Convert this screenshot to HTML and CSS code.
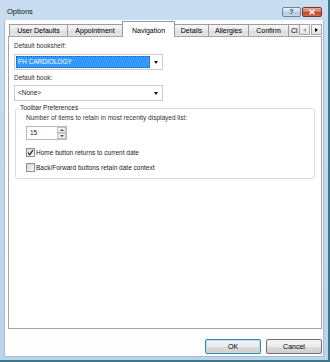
FILE: index.html
```html
<!DOCTYPE html>
<html lang="en">
    <head>
        <meta charset="UTF-8" />
        <title>Options</title>
        <link rel="stylesheet" href="styles.css">
    </head>
    <body>
        <div class="window">
            <div class="titlebar">
                <span class="title">Options</span>
                <div class="caption-buttons">
                    <span class="cap-btn help">?</span>
                    <span class="cap-btn close">
                        <svg width="8" height="6" viewBox="0 0 8 6"><path d="M1.5 0.8 L6.5 5.2 M6.5 0.8 L1.5 5.2" stroke="#fff" stroke-width="1.5" fill="none"/></svg>
                    </span>
                </div>
            </div>
            <div class="client">
                <div class="tabstrip">
                    <div class="tabs">
                        <div class="tab" id="tab-user">User Defaults</div>
                        <div class="tab" id="tab-appt">Appointment</div>
                        <div class="tab active" id="tab-nav">Navigation</div>
                        <div class="tab" id="tab-details">Details</div>
                        <div class="tab" id="tab-allergies">Allergies</div>
                        <div class="tab" id="tab-confirm">Confirm</div>
                        <div class="tab" id="tab-clinical">Cl</div>
                    </div>
                    <div class="scroller">
                        <span class="scroll-btn"><span class="arrow-left"></span></span>
                        <span class="scroll-btn"><span class="arrow-right"></span></span>
                    </div>
                </div>
                <div class="panel">
                    <div class="label">Default bookshelf:</div>
                    <div class="combo">
                        <span class="combo-value selected">FH CARDIOLOGY</span>
                        <span class="combo-arrow"></span>
                    </div>
                    <div class="label label-book">Default book:</div>
                    <div class="combo combo-book">
                        <span class="combo-value">&lt;None&gt;</span>
                        <span class="combo-arrow"></span>
                    </div>
                    <fieldset class="group">
                        <legend>Toolbar Preferences</legend>
                        <div class="label">Number of items to retain in most recently displayed list:</div>
                        <div class="spinner">
                            <span class="spin-value">15</span>
                            <span class="spin-btns">
                                <span class="spin-btn"><span class="arrow-up"></span></span>
                                <span class="spin-btn"><span class="arrow-down"></span></span>
                            </span>
                        </div>
                        <div class="check check-first">
                            <span class="box">
                                <svg width="7" height="7" viewBox="0 0 7 7"><path d="M1 3.6 L2.8 5.6 L6 1.2" stroke="#22325a" stroke-width="1.4" fill="none"/></svg>
                            </span>
                            Home button returns to current date
                        </div>
                        <div class="check">
                            <span class="box"></span>
                            Back/Forward buttons retain date context
                        </div>
                    </fieldset>
                </div>
                <div class="footer">
                    <button class="btn default">OK</button>
                    <button class="btn">Cancel</button>
                </div>
            </div>
        </div>
    </body>
</html>
```

FILE: styles.css
```css
body {
    margin: 0;
    font-family: "Liberation Sans", Arial, sans-serif;
    font-size: 6.5px;
    color: #1a1a1a;
}
.window {
    width: 330px;
    height: 362px;
    box-sizing: border-box;
    display: flex;
    flex-direction: column;
    padding: 0 4px 3px 4px;
    background: linear-gradient(#c9ddf2, #bcd3ec);
    border-right: 2px solid #3a7889;
    border-bottom: 2px solid #3a7889;
}

/* title bar */
.titlebar {
    height: 20px;
    box-sizing: border-box;
    padding: 3px 2px 0 3px;
    display: flex;
    align-items: center;
    justify-content: space-between;
}
.title {
    font-size: 7.5px;
    color: #111;
}
.caption-buttons {
    display: flex;
    gap: 1px;
}
.cap-btn {
    width: 19px;
    height: 10px;
    box-sizing: border-box;
    border-radius: 2px;
    display: flex;
    align-items: center;
    justify-content: center;
}
.help {
    border: 1px solid #6c829e;
    background: linear-gradient(#e8eff8, #cbd9e8 50%, #b4c6db 51%, #c8d7e8);
    color: #34475f;
    font-size: 7px;
    font-weight: bold;
}
.close {
    width: 20px;
    border: 1px solid #7a3327;
    background: linear-gradient(#eaaa9b, #d8755f 50%, #c23f23 51%, #d66a4f);
}

/* client area */
.client {
    flex: 1;
    display: flex;
    flex-direction: column;
    background: #fdfdfd;
    border: 1px solid #a6bad0;
    border-top: none;
    padding: 0 1px 0 3px;
}
.tabstrip {
    display: flex;
    height: 17px;
    margin-left: 1px;
}
.tabs {
    flex: 1;
    display: flex;
    align-items: flex-end;
    overflow: hidden;
}
.tab {
    flex: none;
    box-sizing: border-box;
    height: 12px;
    margin: 0 0 1px -1px;
    border: 1px solid #9a9ca3;
    border-bottom: none;
    background: linear-gradient(#f6f6f6, #e8e8e8 50%, #dcdcdc 51%, #e6e6e6);
    text-align: center;
    line-height: 11px;
    font-size: 7px;
    color: #000;
}
.tab:first-child {
    margin-left: 0;
}
.tab.active {
    height: 16px;
    margin-bottom: 0;
    padding-top: 3px;
    background: #fff;
    position: relative;
    z-index: 1;
}
#tab-user { width: 59px; }
#tab-appt { width: 56px; }
#tab-nav { width: 53px; }
#tab-details { width: 35px; }
#tab-allergies { width: 41px; }
#tab-confirm { width: 41px; }
#tab-clinical {
    width: 11px;
    border-right: none;
    text-align: left;
    padding-left: 2px;
}
.scroller {
    display: flex;
    gap: 1px;
    padding-top: 4px;
}
.scroll-btn {
    width: 11px;
    height: 11px;
    box-sizing: border-box;
    border: 1px solid #a4a6ab;
    background: linear-gradient(#fafafa, #e3e3e3);
    display: flex;
    align-items: center;
    justify-content: center;
}
.arrow-left {
    border-style: solid;
    border-width: 2.5px 3px 2.5px 0;
    border-color: transparent #a9a9a9 transparent transparent;
}
.arrow-right {
    border-style: solid;
    border-width: 2.5px 0 2.5px 3px;
    border-color: transparent transparent transparent #000;
}

/* tab page */
.panel {
    flex: 1;
    margin-top: -1px;
    border: 1px solid #a2a5ab;
    background: #fff;
    padding: 5px 0 0 5px;
}
.label {
    line-height: 8px;
    color: #333;
}
.label-book {
    margin-top: 4px;
}
.combo {
    width: 149px;
    height: 16px;
    box-sizing: border-box;
    margin-top: 4px;
    border: 1px solid #c9ccd2;
    padding: 1px 0 1px 1px;
    display: flex;
}
.combo-book {
    margin-top: 3px;
}
.combo-value {
    flex: 1;
    line-height: 12px;
    padding-left: 2px;
}
.combo-value.selected {
    background: #3399ff;
    color: #fff;
    outline: 1px dotted #1c5fb0;
    outline-offset: -1px;
}
.combo-arrow {
    width: 12px;
    display: flex;
    align-items: center;
    justify-content: center;
}
.combo-arrow::after {
    content: "";
    border-style: solid;
    border-width: 3px 2.5px 0 2.5px;
    border-color: #111 transparent transparent transparent;
}

/* group box */
.group {
    width: 300px;
    box-sizing: border-box;
    min-width: 0;
    margin: 3px 0 0 1px;
    border: 1px solid #d5dde6;
    border-radius: 3px;
    padding: 2px 0 6px 10px;
}
.group legend {
    margin-left: -7px;
    padding: 0 1px;
    line-height: 8px;
}
.spinner {
    width: 41px;
    height: 14px;
    box-sizing: border-box;
    margin-top: 4px;
    border: 1px solid #b5b8be;
    display: flex;
}
.spin-value {
    flex: 1;
    line-height: 12px;
    padding-left: 3px;
}
.spin-btns {
    width: 9px;
    display: flex;
    flex-direction: column;
}
.spin-btn {
    flex: 1;
    border: 1px solid #c3c5ca;
    background: linear-gradient(#f7f7f7, #e2e2e2);
    display: flex;
    align-items: center;
    justify-content: center;
}
.arrow-up {
    border-style: solid;
    border-width: 0 2px 2px 2px;
    border-color: transparent transparent #555 transparent;
}
.arrow-down {
    border-style: solid;
    border-width: 2px 2px 0 2px;
    border-color: #555 transparent transparent transparent;
}
.check {
    height: 10px;
    margin-top: 5px;
    display: flex;
    align-items: center;
    gap: 1px;
}
.check-first {
    margin-top: 7px;
}
.box {
    width: 9px;
    height: 9px;
    box-sizing: border-box;
    border: 1px solid #8e8f8f;
    background: linear-gradient(135deg, #d6d6d6, #fbfbfb);
    display: flex;
    align-items: center;
    justify-content: center;
}

/* buttons */
.footer {
    display: flex;
    justify-content: flex-end;
    gap: 5px;
    padding: 10px 0 2px;
}
.btn {
    width: 56px;
    height: 15px;
    padding: 0;
    border: 1px solid #707070;
    border-radius: 2px;
    background: linear-gradient(#f3f3f3, #ebebeb 50%, #dddddd 51%, #cfcfcf);
    font-family: inherit;
    font-size: 7px;
    color: #000;
}
.btn.default {
    border-color: #3c7fb1;
    box-shadow: inset 0 0 0 1px #b8e0f6;
}
```
